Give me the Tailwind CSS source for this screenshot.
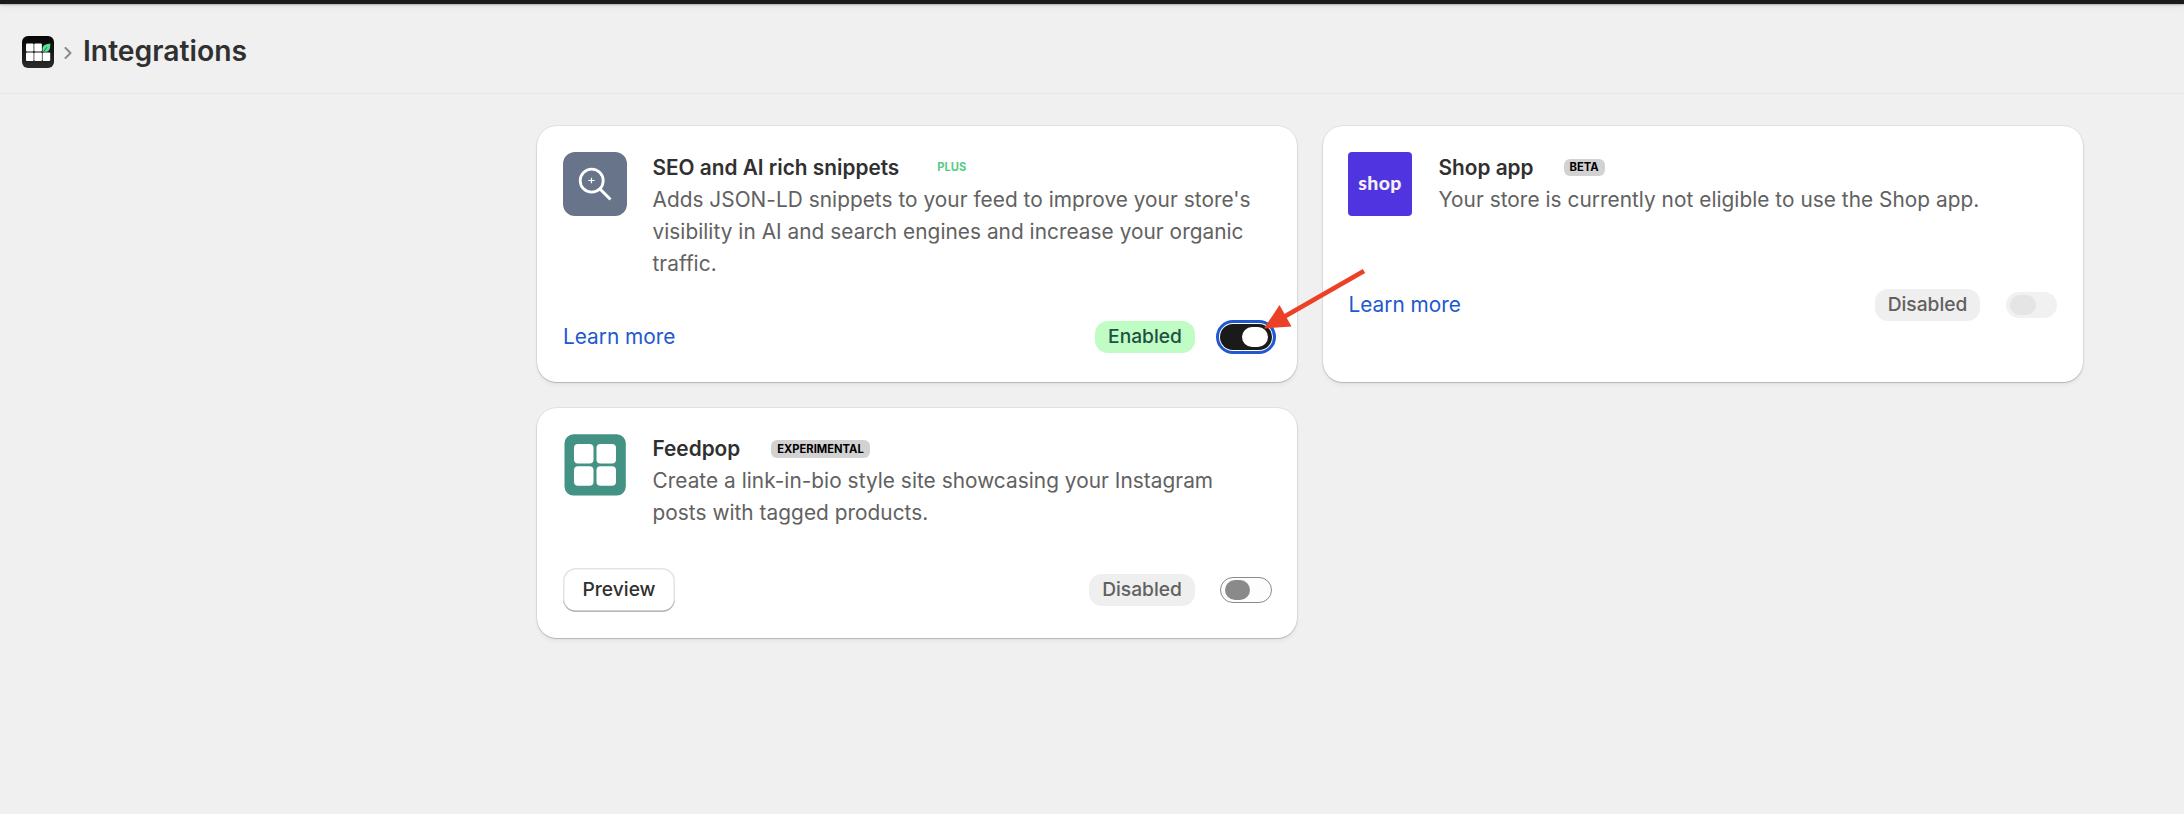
<!DOCTYPE html>
<html lang="en">
<head>
  <meta charset="UTF-8" />
  <meta name="viewport" content="width=device-width, initial-scale=1" />
  <title>Integrations</title>
  <script src="https://cdn.jsdelivr.net/npm/@tailwindcss/browser@4"></script>
</head>
<body class="relative min-h-screen bg-[#f0f0f0] font-['Inter',sans-serif] text-[20.8px] leading-8 text-[#303030] overflow-hidden">

  <div class="h-1 bg-[#1a1a1a] shadow-[0_1px_2px_rgba(0,0,0,0.25),0_2px_8px_rgba(0,0,0,0.08)]"></div>

  <header class="flex items-center h-[90px] pl-[22px] pt-[7px] border-b border-[#e8e8e8]">
    <svg class="w-8 h-8" viewBox="0 0 32 32">
      <defs>
        <linearGradient id="dark" x1="0" y1="0" x2="0" y2="1">
          <stop offset="0" stop-color="#050505" />
          <stop offset="1" stop-color="#2b2b2b" />
        </linearGradient>
      </defs>
      <rect width="32" height="32" rx="6" fill="url(#dark)" />
      <g fill="#fff">
        <rect x="4" y="7.600" width="7.600" height="7.800" rx="1" />
        <rect x="12.300" y="7.600" width="7.600" height="7.800" rx="1" />
        <rect x="4" y="16.600" width="7.600" height="8.400" rx="1" />
        <rect x="12.300" y="16.600" width="7.600" height="8.400" rx="1" />
        <rect x="20.600" y="16.600" width="7.600" height="8.400" rx="1" />
      </g>
      <path d="M28.300 7.600c-3 .6-7.500.6-7.800 5.400L20.500 15.800h4.500c3.200-1 3.200-5 3.300-8.200z" fill="#56e394" />
      <path d="M21.500 15.600l3.500-4.400" stroke="#1c4a32" stroke-width=".8" fill="none" />
    </svg>
    <svg class="w-[8px] h-[12px] ml-[10px] mt-[2px]" viewBox="0 0 8 12" fill="none" stroke="#8a8a8a" stroke-width="2" stroke-linecap="round" stroke-linejoin="round">
      <path d="M1.500 1l5 5-5 5" />
    </svg>
    <h1 class="ml-[11px] -mt-[2px] text-[28.300px] font-semibold">Integrations</h1>
  </header>

  <main class="grid grid-cols-[760px_760px] gap-[26px] pt-[32px] pl-[537px]">

    <section class="h-[256px] p-[26px] bg-white rounded-[20px] shadow-[0_0_0_1px_rgba(0,0,0,0.06),0_1px_1px_rgba(0,0,0,0.16),0_3px_4px_rgba(0,0,0,0.05)]">
      <div class="flex gap-[25.500px] h-32">
        <svg class="w-16 h-16 shrink-0" viewBox="0 0 64 64" fill="none" stroke="#fff">
          <rect width="64" height="64" rx="12" fill="#68748a" stroke="none" />
          <circle cx="28.700" cy="28.700" r="11.500" stroke-width="2.800" />
          <path d="M37 37l10.500 10.500" stroke-width="3" />
          <path d="M28.500 25.800v5.400M25.300 28.500h6.400" stroke-width="1.200" />
        </svg>
        <div>
          <div class="flex items-center">
            <h2 class="font-semibold">SEO and AI rich snippets</h2>
            <span class="ml-[32px] px-[6px] mb-px text-[11.2px] leading-[17px] font-bold text-[#56cc85]">PLUS</span>
          </div>
          <p class="tracking-[0.045px] text-[#616161]">Adds JSON-LD snippets to your feed to improve your store's<br>visibility in AI and search engines and increase your organic<br>traffic.</p>
        </div>
      </div>
      <div class="flex items-center h-[38px] mt-[38px]">
        <a href="#" class="text-[#2158d0]">Learn more</a>
        <span class="ml-auto w-[100px] h-8 rounded-[13px] bg-[#c0fdc4] text-center text-[19.2px] leading-[31px] font-medium text-[#1f4f45]">Enabled</span>
        <button class="flex items-center justify-end ml-[25px] -mr-px w-[52px] h-[26px] pr-1 rounded-full bg-[#1a1a1a] outline-3 outline-offset-1 outline-[#2158d0]">
          <span class="w-[26px] h-[20px] rounded-[10px] bg-white"></span>
        </button>
      </div>
    </section>

    <section class="h-[256px] p-[26px] bg-white rounded-[20px] shadow-[0_0_0_1px_rgba(0,0,0,0.06),0_1px_1px_rgba(0,0,0,0.16),0_3px_4px_rgba(0,0,0,0.05)]">
      <div class="flex gap-[25.500px] h-24">
        <div class="w-16 h-16 shrink-0 -ml-px mr-px rounded-[4px] bg-[#5034e0] text-center font-['Lato',sans-serif] text-[19.500px] leading-[61px] tracking-[0.4px] font-black text-[#f4f0f2]">shop</div>
        <div>
          <div class="flex items-center">
            <h2 class="font-semibold">Shop app</h2>
            <span class="ml-[30px] px-[6px] mb-px h-[17px] rounded-[6px] bg-[#d2d2d2] text-[11.2px] leading-[17px] font-bold text-black">BETA</span>
          </div>
          <p class="tracking-[0.045px] text-[#616161]">Your store is currently not eligible to use the Shop app.</p>
        </div>
      </div>
      <div class="flex items-center h-[38px] mt-[38px]">
        <a href="#" class="-ml-[0.500px] text-[#2158d0]">Learn more</a>
        <span class="ml-auto w-[105px] h-8 rounded-[13px] bg-[#efefef] text-center text-[19.2px] leading-[31px] font-medium text-[#616161]">Disabled</span>
        <button class="flex items-center ml-[26px] w-[51px] h-[26px] pl-1 rounded-full bg-[#f1f1f1]">
          <span class="w-[26px] h-[20px] rounded-[10px] bg-[#e5e5e5]"></span>
        </button>
      </div>
    </section>

    <section class="h-[230px] p-[26px] bg-white rounded-[20px] shadow-[0_0_0_1px_rgba(0,0,0,0.06),0_1px_1px_rgba(0,0,0,0.16),0_3px_4px_rgba(0,0,0,0.05)]">
      <div class="flex gap-[25.500px] h-24">
        <svg class="w-16 h-16 shrink-0" viewBox="0 0 64 64">
          <rect x="1.500" y="0.300" width="61.300" height="61.300" rx="9" fill="#439284" />
          <g fill="#fff">
            <rect x="11" y="10" width="19.500" height="19.500" rx="4" />
            <rect x="33.500" y="10" width="19.500" height="19.500" rx="4" />
            <rect x="11" y="32.300" width="19.500" height="19.500" rx="4" />
            <rect x="33.500" y="32.300" width="19.500" height="19.500" rx="4" />
          </g>
        </svg>
        <div class="-mt-px">
          <div class="flex items-center">
            <h2 class="font-semibold">Feedpop</h2>
            <span class="ml-[31px] px-[6px] h-[18px] rounded-[6px] bg-[#d2d2d2] text-[11.2px] leading-[18px] font-bold text-black">EXPERIMENTAL</span>
          </div>
          <p class="tracking-[0.045px] text-[#616161]">Create a link-in-bio style site showcasing your Instagram<br>posts with tagged products.</p>
        </div>
      </div>
      <div class="flex items-center h-[44px] mt-[38px]">
        <button class="w-[112px] h-[44px] pb-[2px] rounded-[13px] bg-white text-[19.2px] font-medium text-[#303030] shadow-[inset_0_-1.500px_0_0_#b5b5b5,inset_0_0_0_1.500px_#e3e3e3]">Preview</button>
        <span class="ml-auto w-[106px] h-8 rounded-[13px] bg-[#efefef] text-center text-[19.2px] leading-[31px] font-medium text-[#616161]">Disabled</span>
        <button class="flex items-center ml-[25px] -mr-px w-[52px] h-[26px] pl-1 rounded-full border border-[#8a8a8a] bg-[#fdfdfd]">
          <span class="w-[25px] h-[20px] rounded-[10px] bg-[#8a8a8a]"></span>
        </button>
      </div>
    </section>

  </main>

  <!-- arrow pointing at the toggle -->
  <svg class="absolute left-[1260px] top-[265px] w-[110px] h-[70px]" viewBox="0 0 110 70">
    <path d="M104 6L22 53" stroke="#ec4126" stroke-width="4.800" />
    <path d="M4 63.500L19.500 40 31.500 61.500z" fill="#ec4126" />
  </svg>

</body>
</html>
